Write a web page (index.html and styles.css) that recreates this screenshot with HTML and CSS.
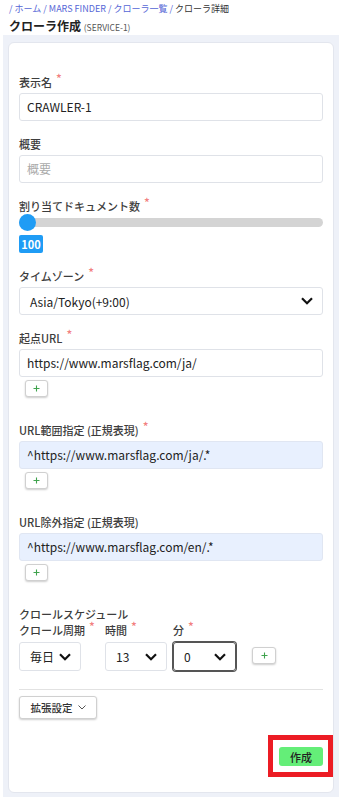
FILE: index.html
```html
<!DOCTYPE html>
<html lang="ja">
<head>
    <meta charset="UTF-8">
    <meta name="viewport" content="width=device-width, initial-scale=1.0">
    <title>クローラ作成</title>
    <link rel="stylesheet" href="styles.css">
</head>
<body>
    <header class="page-head">
        <nav class="crumbs">
            <a href="#">/ ホーム</a> / <a href="#">MARS FINDER</a> / <a href="#">クローラ一覧</a> / <span class="current">クローラ詳細</span>
        </nav>
        <h1 class="page-title">クローラ作成 <small>(SERVICE-1)</small></h1>
    </header>

    <main class="content">
        <form class="card">
            <div class="field">
                <label class="label required">表示名</label>
                <div class="input">CRAWLER-1</div>
            </div>

            <div class="field">
                <label class="label">概要</label>
                <div class="input placeholder">概要</div>
            </div>

            <div class="field">
                <label class="label required">割り当てドキュメント数</label>
                <div class="slider">
                    <div class="slider-track"></div>
                    <div class="slider-thumb"></div>
                </div>
                <div class="slider-value">100</div>
            </div>

            <div class="field">
                <label class="label required">タイムゾーン</label>
                <div class="select">
                    <span>Asia/Tokyo(+9:00)</span>
                    <svg class="chevron" width="12" height="8" viewBox="0 0 12 8"><path d="M1 1.2 L6 6.2 L11 1.2" /></svg>
                </div>
            </div>

            <div class="field">
                <label class="label required">起点URL</label>
                <div class="input">https://www.marsflag.com/ja/</div>
                <button type="button" class="add-btn">
                    <svg width="7" height="7" viewBox="0 0 7 7"><path d="M3.5 0.5 V6.5 M0.5 3.5 H6.5" /></svg>
                </button>
            </div>

            <div class="field">
                <label class="label required">URL範囲指定 (正規表現)</label>
                <div class="input filled">^https://www.marsflag.com/ja/.*</div>
                <button type="button" class="add-btn">
                    <svg width="7" height="7" viewBox="0 0 7 7"><path d="M3.5 0.5 V6.5 M0.5 3.5 H6.5" /></svg>
                </button>
            </div>

            <div class="field">
                <label class="label">URL除外指定 (正規表現)</label>
                <div class="input filled">^https://www.marsflag.com/en/.*</div>
                <button type="button" class="add-btn">
                    <svg width="7" height="7" viewBox="0 0 7 7"><path d="M3.5 0.5 V6.5 M0.5 3.5 H6.5" /></svg>
                </button>
            </div>

            <div class="schedule">
                <div class="label">クロールスケジュール</div>
                <div class="schedule-row">
                    <div class="schedule-col col-period">
                        <label class="label required">クロール周期</label>
                        <div class="select small">
                            <span>毎日</span>
                            <svg class="chevron" width="12" height="8" viewBox="0 0 12 8"><path d="M1 1.2 L6 6.2 L11 1.2" /></svg>
                        </div>
                    </div>
                    <div class="schedule-col col-hour">
                        <label class="label required">時間</label>
                        <div class="select small">
                            <span>13</span>
                            <svg class="chevron" width="12" height="8" viewBox="0 0 12 8"><path d="M1 1.2 L6 6.2 L11 1.2" /></svg>
                        </div>
                    </div>
                    <div class="schedule-col col-minute">
                        <label class="label required">分</label>
                        <div class="select small focused">
                            <span>0</span>
                            <svg class="chevron" width="12" height="8" viewBox="0 0 12 8"><path d="M1 1.2 L6 6.2 L11 1.2" /></svg>
                        </div>
                    </div>
                    <button type="button" class="add-btn inline">
                        <svg width="7" height="7" viewBox="0 0 7 7"><path d="M3.5 0.5 V6.5 M0.5 3.5 H6.5" /></svg>
                    </button>
                </div>
            </div>

            <hr class="divider">

            <button type="button" class="expand-btn">
                <span>拡張設定</span>
                <svg width="8" height="5" viewBox="0 0 8 5"><path d="M0.5 0.5 L4 4 L7.5 0.5" /></svg>
            </button>

            <div class="actions">
                <!-- red frame marks the button -->
                <span class="highlight">
                    <button type="button" class="submit-btn">作成</button>
                </span>
            </div>
        </form>
    </main>
</body>
</html>
```

FILE: styles.css
```css
body {
    margin: 0;
    padding: 0;
    font-family: "Noto Sans CJK JP", "Noto Sans", sans-serif;
    background-color: white;
    color: #333;
    display: flex;
    flex-direction: column;
    min-height: 100vh;
}
.page-head {
    padding: 2px 9px 0;
    height: 33px;
}
.crumbs {
    font-size: 9px;
    line-height: 13px;
    color: #5566d6;
}
.crumbs a {
    color: #5566d6;
    text-decoration: none;
}
.crumbs .current {
    color: #333;
}
.page-title {
    margin: 3px 0 0;
    font-size: 12px;
    line-height: 16px;
    font-weight: 700;
    color: #222;
}
.page-title small {
    font-size: 8.5px;
    font-weight: 400;
    color: #555;
}
.content {
    flex: 1;
    background-color: #eef1f8;
    margin-left: 3px;
    padding: 7px 5px 14px;
}
.card {
    background-color: white;
    border: 1px solid #e3e6ee;
    border-radius: 6px;
    padding: 31px 10px 15px;
}
.field {
    margin-bottom: 15px;
}
.label {
    display: block;
    font-size: 11px;
    line-height: 16px;
    font-weight: 500;
    color: #3d3d3d;
    margin-bottom: 3px;
}
.label.required::after {
    content: "*";
    color: #f28080;
    font-size: 12px;
    margin-left: 4px;
    position: relative;
    top: -4px;
}
.input {
    box-sizing: border-box;
    height: 28px;
    border: 1px solid #dfe2e8;
    border-radius: 3px;
    padding: 0 7px;
    font-size: 12px;
    line-height: 26px;
    color: #222;
}
.input.placeholder {
    color: #aaa;
}
.input.filled {
    background-color: #e8f0fe;
    border-color: #e0e6f2;
}
.slider {
    position: relative;
    height: 17px;
    margin-top: -3px;
}
.slider-track {
    position: absolute;
    left: 0;
    right: 0;
    top: 4px;
    height: 9px;
    border-radius: 5px;
    background-color: #d4d4d4;
}
.slider-thumb {
    position: absolute;
    left: 0;
    top: 0;
    width: 17px;
    height: 17px;
    border-radius: 50%;
    background-color: #1f9cf5;
}
.slider-value {
    margin-top: 4px;
    width: 24px;
    height: 18px;
    border-radius: 2px;
    background-color: #1f9cf5;
    color: white;
    font-size: 11px;
    font-weight: 700;
    line-height: 18px;
    text-align: center;
}
.select {
    box-sizing: border-box;
    height: 28px;
    border: 1px solid #dfe2e8;
    border-radius: 3px;
    padding: 0 9px 0 10px;
    display: flex;
    align-items: center;
    justify-content: space-between;
    font-size: 12px;
    color: #222;
}
.chevron path {
    fill: none;
    stroke: #111;
    stroke-width: 2.2;
}
.add-btn {
    display: flex;
    align-items: center;
    justify-content: center;
    box-sizing: border-box;
    width: 23px;
    height: 17px;
    margin: 3px 0 25px 6px;
    padding: 0;
    background-color: white;
    border: 1px solid #d0d0d0;
    border-radius: 3px;
    box-shadow: 0 1px 2px rgba(0, 0, 0, 0.2);
}
.add-btn path {
    stroke: #3fa34d;
    stroke-width: 1.1;
}
.add-btn.inline {
    margin: 0 0 7px;
    width: 24px;
}
.schedule > .label {
    margin-bottom: 0;
}
.schedule-row {
    display: flex;
    align-items: flex-end;
}
.schedule-col .label {
    margin-bottom: 4px;
}
.select.small {
    width: 62px;
    height: 29px;
}
.col-period {
    width: 86px;
}
.col-hour {
    width: 68px;
}
.col-minute {
    width: 63px;
    margin-right: 16px;
}
.select.focused {
    width: 63px;
    border-color: #555;
    box-shadow: 0 0 0 1px #555;
}
.divider {
    border: none;
    border-top: 1px solid #e2e2e2;
    margin: 18px 0 6px;
}
.expand-btn {
    display: flex;
    align-items: center;
    justify-content: center;
    gap: 5px;
    box-sizing: border-box;
    width: 78px;
    height: 23px;
    padding: 0;
    white-space: nowrap;
    background-color: white;
    border: 1px solid #d0d0d0;
    border-radius: 3px;
    box-shadow: 0 1px 2px rgba(0, 0, 0, 0.2);
    font-family: inherit;
    font-size: 10.5px;
    font-weight: 500;
    color: #333;
}
.expand-btn path {
    fill: none;
    stroke: #555;
    stroke-width: 1;
}
.actions {
    display: flex;
    justify-content: flex-end;
    margin-top: 16px;
    margin-right: -10px;
}
.highlight {
    display: block;
    border: 5px solid #ec1c24;
    padding: 7px 5px 6px 6px;
}
.submit-btn {
    display: block;
    width: 44px;
    height: 19px;
    padding: 0;
    border: none;
    border-radius: 3px;
    background-color: #64ee78;
    font-family: inherit;
    font-size: 11px;
    font-weight: 500;
    color: #222;
}
```
